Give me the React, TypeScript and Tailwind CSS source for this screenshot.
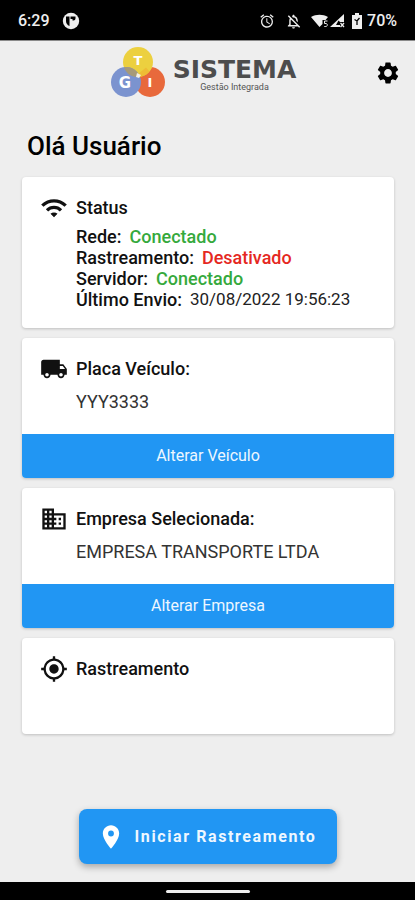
import type { ReactNode } from 'react'
import {
  MdAlarm,
  MdDomain,
  MdLocalShipping,
  MdMyLocation,
  MdOutlineNotificationsOff,
  MdPlace,
  MdSettings,
  MdWifi,
} from 'react-icons/md'

type StatusTone = 'ok' | 'error' | 'plain'

interface StatusItem {
  label: string
  value: string
  tone: StatusTone
}

const statusItems: StatusItem[] = [
  { label: 'Rede:', value: 'Conectado', tone: 'ok' },
  { label: 'Rastreamento:', value: 'Desativado', tone: 'error' },
  { label: 'Servidor:', value: 'Conectado', tone: 'ok' },
  { label: 'Último Envio:', value: '30/08/2022 19:56:23', tone: 'plain' },
]

const toneClasses: Record<StatusTone, string> = {
  ok: 'text-[18px] font-medium text-[#35a93c]',
  error: 'text-[18px] font-medium text-[#e5281f]',
  plain: 'text-[17px] font-normal text-[#222222]',
}

function StatusBar(): React.JSX.Element {
  return (
    <div className="flex h-[41px] items-center justify-between border-b border-[#8a8a8a] bg-black px-[18px] pt-[2px] text-base font-medium text-[#eeeeee]">
      <div className="flex items-center gap-3">
        <span>6:29</span>
        <svg viewBox="0 0 18 18" className="size-[18px]" aria-hidden="true">
          <circle cx="9" cy="9" r="8.2" fill="#eeeeee" />
          <path d="M4 4.500h3.500V14C5.300 13 4 11.500 4 9z" fill="#000" />
          <path d="M8.500 4.500h5v2a2 2 0 0 1-2 2h-1V7h-2z" fill="#000" />
        </svg>
      </div>
      <div className="flex items-center">
        <MdAlarm className="mr-[10px] size-4" aria-hidden="true" />
        <MdOutlineNotificationsOff className="mr-[9px] size-[17px]" aria-hidden="true" />
        <svg viewBox="0 0 35 16" className="mr-[6px] h-4 w-[35px]" aria-hidden="true">
          <path d="M0 4C5 .9 12 .9 17 4l-2.500 3h-3v4L8.500 14z" fill="currentColor" />
          <path d="M16.500 8h-3v2.500h1.500c1.800 0 1.800 3-.2 3h-1.500" fill="none" stroke="currentColor" strokeWidth="1" />
          <path d="M33 1v8h-4v5H19z" fill="currentColor" />
          <path d="M27.500 7.500L29 9v3h-4z" fill="#000" />
          <path d="M29.500 10l3.500 4m0-4l-3.500 4" stroke="currentColor" strokeWidth="1.300" />
        </svg>
        <svg viewBox="0 0 10 16" className="mr-[5px] h-4 w-[10px]" aria-hidden="true">
          <path d="M3 0h4v2h3v14H0V2h3z" fill="currentColor" />
          <path d="M2.500 6.500L5 8l2.500-3M5 8v4" fill="none" stroke="#000" strokeWidth="1.300" />
        </svg>
        <span>70%</span>
      </div>
    </div>
  )
}

function Logo(): React.JSX.Element {
  return (
    <div className="flex items-center gap-2">
      <svg viewBox="0 0 54 52" className="h-[52px] w-[54px]" aria-hidden="true">
        <circle cx="39" cy="35" r="15" fill="#e8693c" />
        <circle cx="27" cy="15" r="15" fill="#ecd03f" />
        <circle cx="15" cy="35" r="15" fill="#7b93cf" />
        <path d="M15 20a15 15 0 0 1 13 7.500L24 30a15 15 0 0 1-11-9.500z" fill="#a79a78" />
        <path d="M27 30a15 15 0 0 0 11.500-5.500L35 20.500 27 27z" fill="#eebd35" />
        <path d="M26 26l4 2-2 3-3-1z" fill="#f4f1e4" />
        <g fill="#ffffff" fontFamily="DejaVu Sans, sans-serif" fontWeight="700" textAnchor="middle">
          <text x="27" y="18" fontSize="13">T</text>
          <text x="14" y="41" fontSize="15">G</text>
          <text x="39" y="40" fontSize="13">I</text>
        </g>
      </svg>
      <div className="flex flex-col items-center pt-1">
        <span className="font-['DejaVu_Sans',sans-serif] text-[25px] leading-6 font-bold text-[#4d4d4d]">SISTEMA</span>
        <span className="text-[9px] leading-[10px] text-[#555555]">Gestão Integrada</span>
      </div>
    </div>
  )
}

interface InfoCardProps {
  icon: ReactNode
  title: string
  action?: string
  children?: ReactNode
}

function InfoCard({ icon, title, action, children }: InfoCardProps): React.JSX.Element {
  return (
    <section className="overflow-hidden rounded-[4px] bg-white shadow-[0_1px_3px_rgba(0,0,0,0.2)]">
      <div className="flex gap-2 p-[18px]">
        <span className="flex h-[26px] shrink-0 items-center text-[28px] text-[#111111]">{icon}</span>
        <div className="min-w-0 flex-1">
          <h2 className="text-[18px] leading-[26px] font-medium">{title}</h2>
          {children}
        </div>
      </div>
      {action && (
        <button type="button" className="h-11 w-full bg-[#2196f3] text-base text-[#eef7ff]">
          {action}
        </button>
      )}
    </section>
  )
}

export default function App(): React.JSX.Element {
  return (
    <div className="flex min-h-screen flex-col bg-[#eeeeee] font-[Roboto,sans-serif] text-[#111111]">
      <StatusBar />

      <header className="grid grid-cols-[1fr_auto_1fr] items-center pt-[6px] pr-[14px] pl-[6px]">
        <span />
        <Logo />
        <button type="button" aria-label="Configurações" className="justify-self-end text-[26px] text-black">
          <MdSettings />
        </button>
      </header>

      <main className="flex flex-1 flex-col pt-[31px] pr-[21px] pl-[22px]">
        <h1 className="mb-[15px] pl-[5px] text-[26px] leading-8 font-medium text-black">Olá Usuário</h1>

        <div className="flex flex-col gap-[10px]">
          <InfoCard icon={<MdWifi />} title="Status">
            <dl className="mt-[5px]">
              {statusItems.map((item) => (
                <div key={item.label} className="flex h-[21px] items-center gap-2">
                  <dt className="text-[18px] font-medium">{item.label}</dt>
                  <dd className={toneClasses[item.tone]}>{item.value}</dd>
                </div>
              ))}
            </dl>
          </InfoCard>

          <InfoCard icon={<MdLocalShipping />} title="Placa Veículo:" action="Alterar Veículo">
            <p className="mt-[5px] text-[18px] leading-[29px] text-[#333333]">YYY3333</p>
          </InfoCard>

          <InfoCard icon={<MdDomain />} title="Empresa Selecionada:" action="Alterar Empresa">
            <p className="mt-[5px] text-[18px] leading-[29px] text-[#333333]">EMPRESA TRANSPORTE LTDA</p>
          </InfoCard>

          <InfoCard icon={<MdMyLocation />} title="Rastreamento">
            <div className="h-[34px]" />
          </InfoCard>
        </div>

        <button
          type="button"
          className="mx-auto mt-auto mb-[18px] flex h-[55px] items-center gap-[10px] rounded-lg bg-[#2196f3] pr-[21px] pl-[18px] text-base font-bold tracking-widest text-[#eef7ff] shadow-[0_3px_7px_rgba(0,0,0,0.3)]"
        >
          <MdPlace className="size-7 text-white" aria-hidden="true" />
          Iniciar Rastreamento
        </button>
      </main>

      <div className="flex h-[18px] items-center justify-center bg-black">
        <div className="h-[3px] w-[84px] rounded-full bg-[#eeeeee]" />
      </div>
    </div>
  )
}
